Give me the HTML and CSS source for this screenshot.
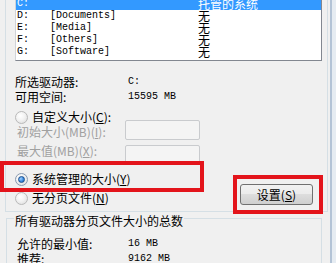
FILE: index.html
```html
<!DOCTYPE html>
<html lang="zh-CN">
<head>
    <meta charset="UTF-8">
    <meta name="viewport" content="width=device-width, initial-scale=1.0">
    <title>虚拟内存</title>
    <link rel="stylesheet" href="styles.css">
</head>
<body>
    <div class="screen">
        <div class="dialog">
            <div class="group group-drive">
                <div class="drive-list">
                    <div class="drive-rows">
                        <div class="drive selected">
                            <span class="letter mono">C:</span>
                            <span class="volume mono"></span>
                            <span class="state">托管的系统</span>
                        </div>
                        <div class="drive">
                            <span class="letter mono">D:</span>
                            <span class="volume mono">[Documents]</span>
                            <span class="state">无</span>
                        </div>
                        <div class="drive">
                            <span class="letter mono">E:</span>
                            <span class="volume mono">[Media]</span>
                            <span class="state">无</span>
                        </div>
                        <div class="drive">
                            <span class="letter mono">F:</span>
                            <span class="volume mono">[Others]</span>
                            <span class="state">无</span>
                        </div>
                        <div class="drive">
                            <span class="letter mono">G:</span>
                            <span class="volume mono">[Software]</span>
                            <span class="state">无</span>
                        </div>
                    </div>
                </div>

                <div class="info">
                    <div class="info-row">
                        <span class="info-name">所选驱动器:</span>
                        <span class="info-value mono">C:</span>
                    </div>
                    <div class="info-row">
                        <span class="info-name">可用空间:</span>
                        <span class="info-value mono">15595 MB</span>
                    </div>
                </div>

                <div class="option option-custom">
                    <span class="radio"></span>
                    <span>自定义大小(<u>C</u>):</span>
                </div>
                <div class="field field-initial">
                    <span class="field-name">初始大小(MB)(<u>I</u>):</span>
                    <span class="box"></span>
                </div>
                <div class="field field-max">
                    <span class="field-name">最大值(MB)(<u>X</u>):</span>
                    <span class="box"></span>
                </div>
                <div class="option option-system">
                    <span class="radio checked"></span>
                    <span>系统管理的大小(<u>Y</u>)</span>
                </div>
                <div class="option-row">
                    <div class="option option-none">
                        <span class="radio"></span>
                        <span>无分页文件(<u>N</u>)</span>
                    </div>
                    <button type="button" class="set-button">设置(<u>S</u>)</button>
                </div>
            </div>

            <div class="group group-total">
                <div class="group-title">所有驱动器分页文件大小的总数</div>
                <div class="totals">
                    <div class="info-row">
                        <span class="info-name">允许的最小值:</span>
                        <span class="info-value mono">16 MB</span>
                    </div>
                    <div class="info-row">
                        <span class="info-name">推荐:</span>
                        <span class="info-value mono">9162 MB</span>
                    </div>
                </div>
            </div>

            <div class="mark mark-system"></div>
            <div class="mark mark-set"></div>
        </div>
        <div class="frame"></div>
        <div class="outside"></div>
    </div>
</body>
</html>
```

FILE: styles.css
```css
body {
    margin: 0;
    padding: 0;
    font-family: "Noto Sans CJK SC", "Liberation Sans", sans-serif;
    font-size: 12px;
    color: #000;
    background: #f0f0f0;
}

.screen {
    display: flex;
    width: 336px;
    height: 263px;
    overflow: hidden;
}

.dialog {
    position: relative;
    width: 330px;
    flex-shrink: 0;
    background: #f0f0f0;
}

.frame {
    width: 2px;
    background: #b3c3d6;
}

.outside {
    flex: 1;
    background: #e6ecf2;
}

.mono {
    font-family: "Liberation Mono", monospace;
    font-size: 10px;
}

/* группы */
.group {
    box-sizing: border-box;
    border: 1px solid #d5dfe5;
}

.group-drive {
    margin-left: 5px;
    width: 323px;
    border-top: none;
    padding: 0 0 6px 9px;
}

.group-total {
    margin: 6px 0 0 6px;
    width: 316px;
    padding-left: 10px;
    height: 60px;
}

.group-title {
    width: fit-content;
    margin: -5px 0 0 -3px;
    padding: 0 1px;
    line-height: 14px;
    background: #f0f0f0;
}

.totals {
    margin-top: 8px;
}

/* список дисков */
.drive-list {
    width: 307px;
    height: 61px;
    box-sizing: border-box;
    background: #fff;
    border-left: 1px solid #d0d3d8;
    border-right: 1px solid #828790;
    border-bottom: 1px solid #828790;
    overflow: hidden;
}

.drive-rows {
    margin-top: -2px;
}

.drive {
    display: flex;
    align-items: center;
    height: 12px;
    line-height: 12px;
    padding-left: 1px;
}

.drive.selected {
    background: #3399ff;
    color: #fff;
}

.letter {
    width: 33px;
}

.volume {
    width: 148px;
}

/* сведения */
.info {
    margin-top: 13px;
}

.info-row {
    display: flex;
    height: 15px;
    line-height: 15px;
}

.info-name {
    width: 113px;
}

.group-total .info-name {
    width: 111px;
}

/* переключатели */
.option {
    display: flex;
    align-items: center;
    line-height: 12px;
    height: 12px;
}

.option-custom {
    margin-top: 7px;
}

.option-system {
    margin-top: 8px;
}

.radio {
    width: 11px;
    height: 11px;
    margin-right: 4px;
    border: 1px solid #b9b9b9;
    border-radius: 50%;
    background: radial-gradient(circle at 40% 35%, #fff 0, #f2f2f2 45%, #d8d8d8 100%);
    display: flex;
    align-items: center;
    justify-content: center;
}

.radio.checked {
    border-color: #8a9bb0;
}

.radio.checked::after {
    content: "";
    width: 5px;
    height: 5px;
    border-radius: 50%;
    border: 1px solid #1b4f8c;
    background: radial-gradient(circle at 35% 35%, #9fd0ff 0, #3b8be0 55%, #1d5fae 100%);
}

.field {
    display: flex;
    height: 20px;
    padding-left: 2px;
}

.field-initial {
    margin-top: -3px;
}

.field-initial .field-name {
    padding-top: 6px;
}

.field-max {
    margin-top: 5px;
}

.field-name {
    width: 108px;
    line-height: 12px;
    color: #a0a0a0;
}

.box {
    width: 75px;
    height: 20px;
    box-sizing: border-box;
    border: 1px solid #c9cbce;
    border-radius: 2px;
    background: #f4f4f4;
}

.option-row {
    display: flex;
    align-items: flex-end;
    height: 21px;
    margin-top: -1px;
}

.option-none {
    margin-bottom: 1px;
}

.set-button {
    margin: 0 14px 0 auto;
    width: 73px;
    height: 21px;
    padding: 0;
    font-family: inherit;
    font-size: 12px;
    line-height: 18px;
    color: #000;
    border: 1px solid #707070;
    border-radius: 3px;
    background: linear-gradient(#f2f2f2 0, #ebebeb 50%, #dddddd 50%, #cfcfcf 100%);
}

/* красные рамки поверх диалога */
.mark {
    position: absolute;
    box-sizing: border-box;
    border: 4px solid #e3141b;
}

.mark-system {
    left: 0;
    top: 161px;
    width: 204px;
    height: 31px;
}

.mark-set {
    left: 233px;
    top: 175px;
    width: 90px;
    height: 39px;
}
```
